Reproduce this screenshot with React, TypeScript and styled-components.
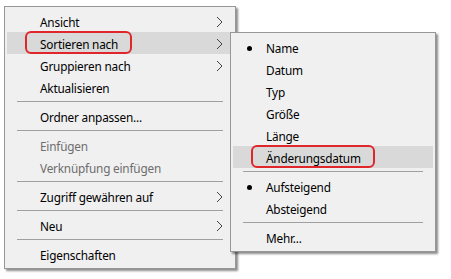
import React from "react";
import styled, { createGlobalStyle } from "styled-components";

const Global = createGlobalStyle`
  html, body { margin: 0; padding: 0; background: #ffffff; }
  body { font-family: "Noto Sans", "Segoe UI", sans-serif; }
`;

const Page = styled.div`
  position: relative;
  width: 451px;
  height: 279px;
  padding: 6px 0 0 4px;
  box-sizing: border-box;
`;

const Menu = styled.div<{ $width: number }>`
  width: ${(p) => p.$width}px;
  box-sizing: border-box;
  background: #f0f0f0;
  border: 1px solid #979797;
  box-shadow: 2px 2px 2px rgba(0, 0, 0, 0.45);
  padding: 3px 2px;
  display: flex;
  flex-direction: column;
`;

const SubMenu = styled(Menu)`
  position: absolute;
  left: 230px;
  top: 32px;
`;

const Row = styled.div<{ $hover?: boolean; $disabled?: boolean }>`
  height: 22px;
  display: grid;
  grid-template-columns: 33px 1fr 17px;
  align-items: center;
  font-size: 11.8px;
  letter-spacing: -0.2px;
  color: ${(p) => (p.$disabled ? "#6d6d6d" : "#000000")};
  background: ${(p) => (p.$hover ? "#d9d9d9" : "transparent")};
  white-space: nowrap;
`;

const Gutter = styled.div`
  display: flex;
  justify-content: center;
  align-items: center;
`;

const Label = styled.span<{ $marked?: boolean }>`
  position: relative;
  justify-self: start;
  line-height: 22px;
  padding-top: 1px;
  ${(p) =>
    p.$marked
      ? `
    &::before {
      content: "";
      position: absolute;
      left: -15px;
      right: -14px;
      top: -1px;
      bottom: 1px;
      border: 2px solid #e0262a;
      border-radius: 6px;
    }
  `
      : ""}
`;

const Bullet = styled.span`
  width: 5px;
  height: 5px;
  border-radius: 50%;
  background: #000;
  margin-top: 1px;
`;

const Arrow = styled.svg`
  display: block;
`;

const Separator = styled.div`
  height: 1px;
  background: #a0a0a0;
  margin: 3px 10px 3px 10px;
`;

const Chevron = () => (
  <Arrow width="7" height="12" viewBox="0 0 7 12">
    <polyline points="1,1 6,6 1,11" fill="none" stroke="#444" strokeWidth="1" />
  </Arrow>
);

type Item =
  | { sep: true }
  | { label: string; sub?: boolean; hover?: boolean; disabled?: boolean; marked?: boolean; bullet?: boolean };

const mainItems: Item[] = [
  { label: "Ansicht", sub: true },
  { label: "Sortieren nach", sub: true, hover: true, marked: true },
  { label: "Gruppieren nach", sub: true },
  { label: "Aktualisieren" },
  { sep: true },
  { label: "Ordner anpassen..." },
  { sep: true },
  { label: "Einfügen", disabled: true },
  { label: "Verknüpfung einfügen", disabled: true },
  { sep: true },
  { label: "Zugriff gewähren auf", sub: true },
  { sep: true },
  { label: "Neu", sub: true },
  { sep: true },
  { label: "Eigenschaften" },
];

const subItems: Item[] = [
  { label: "Name", bullet: true },
  { label: "Datum" },
  { label: "Typ" },
  { label: "Größe" },
  { label: "Länge" },
  { label: "Änderungsdatum", hover: true, marked: true },
  { sep: true },
  { label: "Aufsteigend", bullet: true },
  { label: "Absteigend" },
  { sep: true },
  { label: "Mehr..." },
];

const renderItems = (items: Item[]) =>
  items.map((it, i) =>
    "sep" in it ? (
      <Separator key={i} />
    ) : (
      <Row key={i} $hover={it.hover} $disabled={it.disabled}>
        <Gutter>{it.bullet && <Bullet />}</Gutter>
        <Label $marked={it.marked}>{it.label}</Label>
        <div>{it.sub && <Chevron />}</div>
      </Row>
    )
  );

export default function App() {
  return (
    <Page>
      <Global />
      <Menu $width={232}>{renderItems(mainItems)}</Menu>
      <SubMenu $width={206}>{renderItems(subItems)}</SubMenu>
    </Page>
  );
}
